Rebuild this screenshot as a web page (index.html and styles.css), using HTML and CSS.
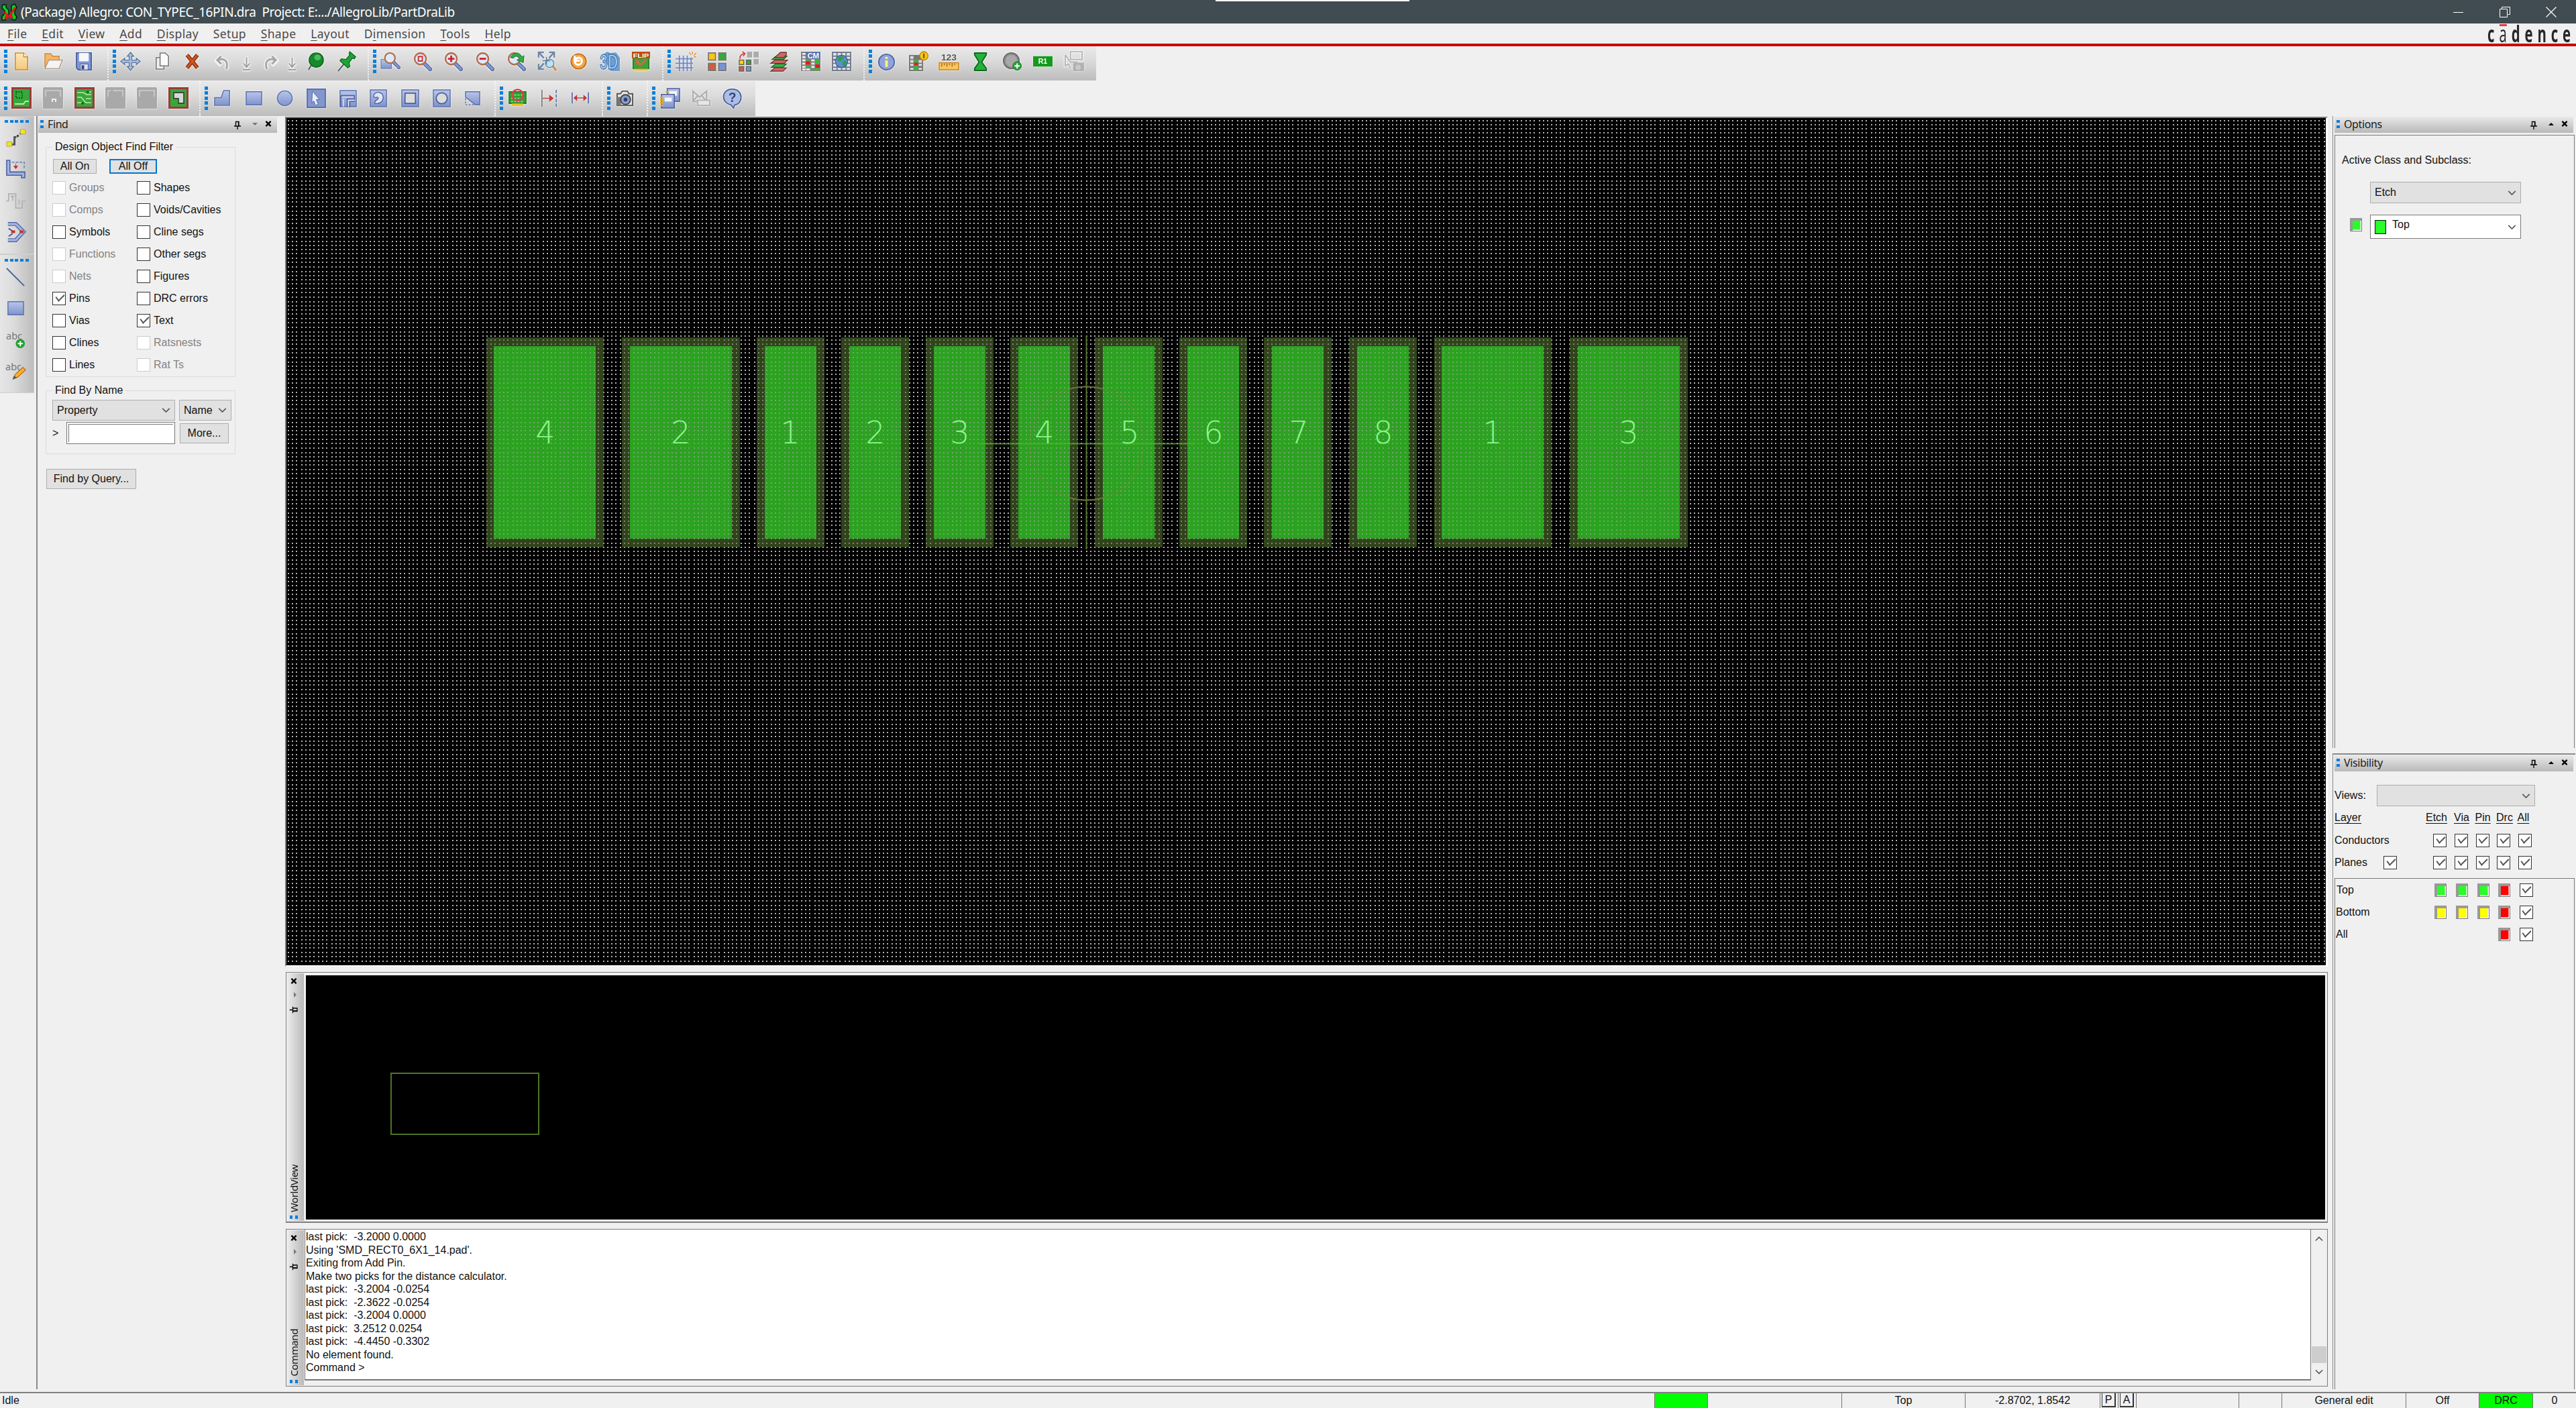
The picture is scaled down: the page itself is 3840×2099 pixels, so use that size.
FILE: index.html
```html
<!DOCTYPE html>
<html lang="en">
<head>
<meta charset="utf-8">
<title>(Package) Allegro: CON_TYPEC_16PIN.dra</title>
<link rel="stylesheet" href="styles.css">
</head>
<body>
<svg class="defs" width="0" height="0">
  <defs>
    <linearGradient id="blue" x1="0" y1="0" x2="0" y2="1"><stop offset="0" stop-color="#b9c6ea"/><stop offset="1" stop-color="#7f93cc"/></linearGradient>
    <linearGradient id="gold" x1="0" y1="0" x2="0" y2="1"><stop offset="0" stop-color="#ffe9b5"/><stop offset="1" stop-color="#f4c77a"/></linearGradient>
    <symbol id="lens" viewBox="0 0 30 30"><path d="M18 18l8 9" stroke="#fff" stroke-width="7" opacity=".6"/><path d="M18 18l9 9" stroke="#50608f" stroke-width="6" stroke-linecap="round"/><path d="M18 18l9 9" stroke="#7f97d6" stroke-width="3.600" stroke-linecap="round"/><circle cx="12" cy="11" r="8.800" fill="#dfe9f8" stroke="#b26f4a" stroke-width="2.600"/></symbol>
    <symbol id="pin" viewBox="0 0 10 13"><path d="M2.500 8V1.500h4.500V8M0 8h10M5 8v5M6.500 2v6" stroke="#000" stroke-width="1.300" fill="none"/></symbol>
    <symbol id="close" viewBox="0 0 10 10"><path d="M1 1l8 8M9 1l-8 8" stroke="#000" stroke-width="2.6"/></symbol>
    <symbol id="chev" viewBox="0 0 14 8"><path d="M1 1l6 6 6-6" stroke="#555" stroke-width="1.8" fill="none"/></symbol>
    <symbol id="down" viewBox="0 0 30 30"><path d="M15 9v14M10 18l5 6 5-6M9 29h12" stroke="#f4f4f4" stroke-width="4" fill="none"/><path d="M15 9v14M10 18l5 6 5-6M9 28h12" stroke="#a0a0a0" stroke-width="2" fill="none"/></symbol>
    <symbol id="graychip" viewBox="0 0 30 32"><rect width="30" height="32" rx="2" fill="#a9a9a9"/><path d="M4 14V5h22v9" fill="none" stroke="#cfcfcf" stroke-width="1.6"/></symbol>
  </defs>
</svg>

<header class="titlebar">
  <svg class="app-icon" viewBox="0 0 24 26"><path d="M2 2h5v4l4 4v6l-5 5v4H1v-5l4-5v-4L1 7z" fill="#0ad01c" stroke="#021" stroke-width="1.5"/><path d="M15 3l5-2 3 5-3 5v5l3 4-2 5-5-1-1-6z" fill="#0ad01c" stroke="#021" stroke-width="1.5"/><path d="M2 13h5l4 5L20 5l2 2-7 10 3 4-3 2-4-3-4 4-3-2 3-5z" fill="#f0141c"/></svg>
  <span class="title-text">(Package) Allegro: CON_TYPEC_16PIN.dra&nbsp; Project: E:.../AllegroLib/PartDraLib</span>
  <i class="top-tab"></i>
  <span class="win-controls">
    <svg width="16" height="16"><path d="M0 8.5h15" stroke="#fff"/></svg>
    <svg width="16" height="16"><path d="M.5 3.5h11v12H.5zM3.5 3.500v-3h12v11h-3" fill="none" stroke="#fff"/></svg>
    <svg width="16" height="16"><path d="M.5.5l15 15M15.500.5l-15 15" stroke="#fff" stroke-width="1.2"/></svg>
  </span>
</header>

<nav class="menubar">
  <span class="menu"><u>F</u>ile</span><span class="menu"><u>E</u>dit</span><span class="menu"><u>V</u>iew</span><span class="menu"><u>A</u>dd</span><span class="menu"><u>D</u>isplay</span><span class="menu">Set<u>u</u>p</span><span class="menu"><u>S</u>hape</span><span class="menu"><u>L</u>ayout</span><span class="menu">D<u>i</u>mension</span><span class="menu"><u>T</u>ools</span><span class="menu"><u>H</u>elp</span>
  <span class="brand">c<i class="bar">a</i>dence</span>
</nav>

<section class="toolrow row-a">
  <div class="group" style="width:162px"><i class="grip"></i>
    <b><svg viewBox="0 0 30 30"><path d="M5 2h13l6 6v20H5z" fill="url(#gold)" stroke="#c98a3c" stroke-width="1.6"/><path d="M18 2v6h6" fill="#fff" stroke="#c98a3c" stroke-width="1.4"/></svg></b>
    <b><svg viewBox="0 0 30 30"><path d="M2 24V3h9l3 4h10v6" fill="#f7b568" stroke="#c98a3c" stroke-width="1.5"/><path d="M2 26L8 13h21l-5 13z" fill="#f6f4f1" stroke="#a99a8c" stroke-width="1.5"/></svg></b>
    <b><svg viewBox="0 0 30 30"><path d="M3 2h23v26H6l-3-3z" fill="#7f96d6" stroke="#4a5f9a" stroke-width="1.8"/><path d="M7 2h15v13H7z" fill="#f5f7fc"/><path d="M9 19h12v9H9z" fill="#dfe4ee" stroke="#4a5f9a"/><path d="M11 21h4v6h-4z" fill="#35467c"/></svg></b>
  </div>
  <div class="group" style="width:388px"><i class="grip"></i>
    <b><svg viewBox="0 0 30 30"><path d="M15 1l5 6h-3v6h7v-3l6 5-6 5v-3h-7v6h3l-5 6-5-6h3v-6H6v3l-6-5 6-5v3h7V7h-3z" fill="#a9c1e0" stroke="#5b7698" stroke-width="1.4"/></svg></b>
    <b><svg viewBox="0 0 30 30"><path d="M6 9h12v18H6z" fill="#eee" stroke="#777" stroke-width="1.6"/><path d="M12 2h8l5 5v15H12z" fill="#fbfbfb" stroke="#777" stroke-width="1.6"/></svg></b>
    <b><svg viewBox="0 0 30 30"><path d="M6 5l16 20M22 5L6 25" stroke="#8a3210" stroke-width="6"/><path d="M6 5l16 20M22 5L6 25" stroke="#d2571f" stroke-width="3"/></svg></b>
    <b style="width:44px"><svg viewBox="0 0 30 30"><path d="M11 7L4 14l7 7M5 14c10-5 18 0 14 13" stroke="#f4f4f4" stroke-width="5" fill="none"/><path d="M11 7L5 13l6 6M6 13c10-4 17 2 13 14" stroke="#a6a6a6" stroke-width="3" fill="none"/></svg></b>
    <b style="width:24px"><svg><use href="#down"/></svg></b>
    <b style="width:44px"><svg viewBox="0 0 30 30"><path d="M19 7l7 7-7 7M25 14c-10-5-18 0-14 13" stroke="#f4f4f4" stroke-width="5" fill="none"/><path d="M19 7l6 6-6 6M24 13c-10-4-17 2-13 14" stroke="#a6a6a6" stroke-width="3" fill="none"/></svg></b>
    <b style="width:24px"><svg><use href="#down"/></svg></b>
    <b><svg viewBox="0 0 30 30"><path d="M10 18L4 28" stroke="#555" stroke-width="2"/><circle cx="16" cy="13" r="11" fill="#168a2c" stroke="#0b5d1c" stroke-width="1.4"/><ellipse cx="18" cy="9" rx="5" ry="4.500" fill="#4dbb5c"/></svg></b>
    <b><svg viewBox="0 0 30 30"><path d="M11 18L1 30" stroke="#555" stroke-width="2"/><path d="M19 0l9 8-2 3-3-1-5 7 1 6-3 2L4 14l2-3 7 1 6-7-1-2z" fill="#21a23a" stroke="#0b6a20" stroke-width="1.4"/></svg></b>
  </div>
  <div class="group" style="width:439px"><i class="grip"></i>
    <b><svg viewBox="0 0 30 30"><path d="M0 12h16v14H0z" fill="url(#blue)" stroke="#5d71ad"/><use href="#lens" x="3" width="27" height="27"/></svg></b>
    <b><svg viewBox="0 0 30 30"><use href="#lens" width="30" height="30"/><path d="M9 7.500h6v7H9z" fill="none" stroke="#d2313a" stroke-width="2"/></svg></b>
    <b><svg viewBox="0 0 30 30"><use href="#lens" width="30" height="30"/><path d="M12 6v10M7 11h10" stroke="#d2212a" stroke-width="3"/></svg></b>
    <b><svg viewBox="0 0 30 30"><use href="#lens" width="30" height="30"/><path d="M7 11h10" stroke="#d2212a" stroke-width="3"/></svg></b>
    <b><svg viewBox="0 0 30 30"><use href="#lens" width="30" height="30"/><path d="M6 9c5-9 14-9 18-1l3-2-1 11-10-4 4-2c-3-5-7-5-9-1z" fill="#35a845" stroke="#14722a"/></svg></b>
    <b><svg viewBox="0 0 30 30"><path d="M2 9V1h8M18 1h8v8M2 19v8h8M3 2l7 8M25 2l-7 8M3 26l7-8" fill="none" stroke="#6d86a6" stroke-width="2.600"/><path d="M22 20l7 9" stroke="#dd8c3c" stroke-width="3.500"/><circle cx="19" cy="18" r="6.500" fill="#bfe1f5" stroke="#5f89b0" stroke-width="1.500"/><path d="M14 8v12M8 14h12" stroke="#567a9c" stroke-width="1.600"/></svg></b>
    <b><svg viewBox="0 0 30 30"><circle cx="15" cy="15" r="11.500" fill="#f6a748" stroke="#c2701d" stroke-width="2"/><path d="M9 15c1 8 12 6 11-1-1-6-8-6-10-1M9 6v8h8" fill="none" stroke="#fff" stroke-width="3"/></svg></b>
    <b><svg viewBox="0 0 30 30"><path d="M5 4l5-4 6 2 8-1 6 8v21H16l-3-4z" fill="#6f9fd0"/><text x="-1" y="27" class="t3d" textLength="28" lengthAdjust="spacingAndGlyphs">3D</text></svg></b>
    <b><svg viewBox="0 0 30 32"><path d="M2 10h26v18H2z" fill="#3fa23a" stroke="#1c7a22" stroke-width="1.6"/><path d="M4 28h22v3H4z" fill="#f0c020"/><path d="M6 14c2 12 14 10 18-2l-4 1c-3 7-8 8-9 1z" fill="#e0604c"/><path d="M0 0h30v11H0z" fill="#b9530f"/><text x="2" y="9.500" class="tflip" textLength="26" lengthAdjust="spacingAndGlyphs">FLIP</text></svg></b>
  </div>
  <div class="group" style="width:300px"><i class="grip"></i>
    <b><svg viewBox="0 0 30 30"><path d="M6 6v24M12 6v24M18 6v24M24 9v21M0 11h27M0 18h27M0 25h27" stroke="#6f86c4" stroke-width="1.900"/><path d="M24 5l-3-4M26 4V0M28 6l4-4M28 8h4" stroke="#dd8a2c" stroke-width="1.500"/></svg></b>
    <b><svg viewBox="0 0 30 30"><g stroke="#777" stroke-width="1.800"><path d="M2 2h11v11H2z" fill="#fcc60d"/><path d="M18 2h11v11H18z" fill="#37a83c"/><path d="M2 18h11v11H2z" fill="#ca6040"/><path d="M18 18h11v11H18z" fill="#7b93d2"/></g></svg></b>
    <b><svg viewBox="0 0 30 30"><path d="M14 0h8v9h-8zM24 0h8v9h-8zM24 11h8v9h-8z" fill="#aaa"/><g stroke="#666" stroke-width="1.600"><path d="M2 13h7v7H2z" fill="#fcd60d"/><path d="M13 13h7v7h-7z" fill="#37a83c"/><path d="M2 23h7v7H2z" fill="#ca6040"/><path d="M13 23h7v7h-7z" fill="#7b93d2"/></g><path d="M3 11c0-6 3-7 7-8M7 0l4 3-3 4" fill="none" stroke="#cf4a4a" stroke-width="2"/></svg></b>
    <b><svg viewBox="0 0 30 30"><g stroke-width="1.400"><path d="M8 25h18l-5 5H2z" fill="#c96a6a" stroke="#7d3030"/><path d="M9 19h17l-5 5H3z" fill="#3fae4e" stroke="#1a6a2a"/><path d="M8 13h20l-5 5H2z" fill="#c96a6a" stroke="#7d3030"/><path d="M10 7h17l-5 5H4z" fill="#3fae4e" stroke="#1a6a2a"/><path d="M17 1h9v4l-4 4H8z" fill="#c96a6a" stroke="#7d3030"/></g></svg></b>
    <b><svg viewBox="0 0 30 30"><path d="M0 0h30v30H0z" fill="#7f7f7f"/><path d="M2 2h5v3H2zM2 7h5v3H2zM2 12h5v3H2zM2 17h5v3H2zM2 22h5v3H2zM2 26h5v3H2zM8 26h6v3H8zM16 12h5v3h-5zM16 22h5v3h-5zM16 17h5v3h-5z" fill="#ececec"/><path d="M8 11h6v3H8zM8 21h6v4H8zM22 11h7v8h-7zM22 25h7v4h-7zM16 26h5v3h-5z" fill="#36b83c"/><path d="M7 15h7v5H7zM22 20h7v5h-7z" fill="#f01414"/><path d="M8 0h22v11H8z" fill="#5c76b0"/><text x="10" y="10" class="tcm" textLength="18" lengthAdjust="spacingAndGlyphs">CM</text></svg></b>
    <b><svg viewBox="0 0 30 30"><path d="M0 0h30v30H0z" fill="#747b8c"/><path d="M2 2h5v4H2zM9 2h5v4H9zM16 2h5v4h-5zM23 2h5v4h-5zM2 8h5v3H2zM2 14h5v3H2zM2 19h5v4H2zM2 25h5v3H2zM9 25h5v3H9zM16 25h5v3h-5zM23 25h5v3h-5zM23 19h5v4h-5zM23 14h5v3h-5zM23 8h5v3h-5z" fill="#dfe4ee"/><circle cx="15" cy="15" r="9.500" fill="#5e8dd0" stroke="#2e4f80"/><path d="M9 10c3-4 9-4 10-1l-4 5-5 1zM16 16l6-3 1 5-5 6z" fill="#2fa045"/></svg></b>
  </div>
  <div class="group last" style="width:345px"><i class="grip"></i>
    <b><svg viewBox="0 0 30 30"><circle cx="15" cy="16" r="12" fill="#8fa4dc" stroke="#5468a6" stroke-width="2"/><path d="M15 8v3.500M15 13.500v10" stroke="#fbf27a" stroke-width="4"/></svg></b>
    <b><svg viewBox="0 0 30 30"><path d="M1 5h22v25H1z" fill="#777"/><path d="M3 7h5v4H3zM3 13h5v4H3zM3 19h5v3H3zM3 25h5v3H3zM16 13h5v4h-5zM16 19h5v3h-5zM16 25h5v3h-5z" fill="#ddd"/><path d="M9 12h6v5H9zM9 22h6v7H9z" fill="#36b83c"/><path d="M9 17h6v4H9z" fill="#e02020"/><circle cx="24" cy="6.500" r="6.500" fill="#f7c613" stroke="#b77c0a" stroke-width="1.300"/><path d="M24 3v7" stroke="#6a4a00" stroke-width="2"/></svg></b>
    <b><svg viewBox="0 0 30 30"><text x="3" y="13.500" class="t123" textLength="24" lengthAdjust="spacingAndGlyphs">123</text><path d="M0 17h30v11H0z" fill="#fbc55e" stroke="#c4862a" stroke-width="1.600"/><path d="M4 18v5M8 18v3M12 18v5M16 18v3M20 18v5M24 18v3" stroke="#9a641a" stroke-width="1.400"/></svg></b>
    <b><svg viewBox="0 0 30 30"><path d="M6 2h18v3l-7 11 7 10v3H6v-3l7-10L6 5z" fill="#25b13b" stroke="#0f6a20" stroke-width="2"/></svg></b>
    <b><svg viewBox="0 0 30 30"><circle cx="14" cy="14" r="12" fill="#8f8f8f" stroke="#6a6a6a" stroke-width="2"/><circle cx="14" cy="14" r="9" fill="#a8a8a8"/><circle cx="23" cy="22" r="6.500" fill="#2aa438" stroke="#157022"/><path d="M23 18v8M19 22h8" stroke="#fff" stroke-width="2"/></svg></b>
    <b><svg viewBox="0 0 30 30"><path d="M0 7h30v16H0z" fill="#159a1c"/><text x="8" y="19" class="tr1" textLength="14" lengthAdjust="spacingAndGlyphs">R1</text></svg></b>
    <b><svg viewBox="0 0 30 30"><path d="M9 0h18v12H9zM1 5v17l5-3 3 7" fill="none" stroke="#f2f2f2" stroke-width="3"/><path d="M9 0h18v12H9zM1 5v17l5-3 3 7M1 5l8 11h10v5" fill="none" stroke="#b1b1b1" stroke-width="1.800"/><path d="M13 17h17v13H13z" fill="#b1b1b1"/><circle cx="21" cy="24" r="4" fill="#c8c8c8"/></svg></b>
  </div>
</section>

<section class="toolrow row-b">
  <div class="group" style="width:299px"><i class="grip"></i>
    <b><svg viewBox="0 0 30 32"><rect x="1.500" y="1.500" width="27" height="29" fill="#35a93a" stroke="#9c3a3a" stroke-width="3"/><path d="M7 7h9v9H7z" fill="none" stroke="#0d5c16" stroke-width="1.800" stroke-dasharray="2 1.500"/><path d="M5 25h13l3-4h5" fill="none" stroke="#bde8a8" stroke-width="1.800"/></svg></b>
    <b><svg viewBox="0 0 30 32"><use href="#graychip" width="30" height="32"/><path d="M14 22v-4h5v4" stroke="#eee" fill="none" stroke-width="2"/></svg></b>
    <b><svg viewBox="0 0 30 32"><rect x="1.500" y="1.500" width="27" height="29" fill="#35a93a" stroke="#9c3a3a" stroke-width="3"/><path d="M4 8h9l5 3h7M4 15h6l7 8h8M4 23h7M20 7h5M17 17h8" fill="none" stroke="#bde8a8" stroke-width="1.600"/><circle cx="20" cy="7" r="1.800" fill="#0d5c16"/><circle cx="12" cy="24" r="1.800" fill="#0d5c16"/></svg></b>
    <b><svg viewBox="0 0 30 32"><use href="#graychip" width="30" height="32"/><path d="M10 4v4h4" fill="none" stroke="#a9a9a9" stroke-width="3"/></svg></b>
    <b><svg viewBox="0 0 30 32"><use href="#graychip" width="30" height="32"/></svg></b>
    <b><svg viewBox="0 0 30 32"><rect x="1.500" y="1.500" width="27" height="29" fill="#35a93a" stroke="#9c3a3a" stroke-width="3"/><path d="M8 8h15v16h-8v-7H8z" fill="#d5d9d5" stroke="#3c4a3c" stroke-width="1.800"/></svg></b>
  </div>
  <div class="group" style="width:440px"><i class="grip"></i>
    <b><svg viewBox="0 0 30 30"><path d="M17 3h9v23H3V14h10z" fill="url(#blue)" stroke="#5d71ad" stroke-width="1.500"/></svg></b>
    <b><svg viewBox="0 0 30 30"><path d="M3 5h24v20H3z" fill="url(#blue)" stroke="#5d71ad" stroke-width="1.500"/></svg></b>
    <b><svg viewBox="0 0 30 30"><circle cx="15" cy="15" r="11.500" fill="url(#blue)" stroke="#5d71ad" stroke-width="1.500"/></svg></b>
    <b><svg viewBox="0 0 30 30"><path d="M1 1h28v28H1z" fill="#8397cd" stroke="#5468a6" stroke-width="1.800"/><path d="M9 4l11 13h-5l3 7-4 2-3-7-3 3z" fill="#e9edf8" stroke="#5468a6"/></svg></b>
    <b><svg viewBox="0 0 30 30"><path d="M3 3h25v25H3z" fill="url(#blue)" stroke="#5d71ad" stroke-width="1.500"/><path d="M4 11h21v5H14v13M4 11v17M18 29V20h8" fill="none" stroke="#4b5e99" stroke-width="1.600"/><path d="M6 13h18M8 28V16M16 28V18h9" stroke="#dfe5f6" stroke-width="1.500" fill="none"/></svg></b>
    <b><svg viewBox="0 0 30 30"><path d="M2 2h25v26H2z" fill="url(#blue)" stroke="#5d71ad" stroke-width="1.500"/><path d="M7 13c0-10 15-9 15 0 0 8-6 11-13 10 0-4 2-5 4-6 3-2 0-5-2-3z" fill="#dfe5f6" stroke="#4b5e99" stroke-width="1.400"/></svg></b>
    <b><svg viewBox="0 0 30 30"><path d="M2 2h26v26H2z" fill="url(#blue)" stroke="#5d71ad" stroke-width="1.500"/><path d="M7 7h16v16H7z" fill="#dcdcdc" stroke="#4b5e99" stroke-width="1.800"/></svg></b>
    <b><svg viewBox="0 0 30 30"><path d="M2 2h26v26H2z" fill="url(#blue)" stroke="#5d71ad" stroke-width="1.500"/><circle cx="15" cy="15" r="8.500" fill="#dcdcdc" stroke="#4b5e99" stroke-width="1.800"/></svg></b>
    <b><svg viewBox="0 0 30 30"><path d="M4 5h22v20H19L4 13z" fill="url(#blue)" stroke="#5d71ad" stroke-width="1.500"/><path d="M4 15v10h13" fill="none" stroke="#5d71ad" stroke-width="1.500" stroke-dasharray="3 2"/></svg></b>
  </div>
  <div class="group" style="width:160px"><i class="grip"></i>
    <b><svg viewBox="0 0 30 30"><path d="M2 5h26v18H2z" fill="#2f9e32" stroke="#167a1c" stroke-width="1.500"/><path d="M6 23h18v4H6z" fill="#f0c020"/><path d="M5 10h20M5 15h20M5 20h20" stroke="#9be08a" stroke-width="1.800" stroke-dasharray="3 2"/><circle cx="15" cy="10" r="8.500" fill="none" stroke="#d8404a" stroke-width="2.600"/></svg></b>
    <b><svg viewBox="0 0 30 30"><path d="M4 2v26" stroke="#777" stroke-width="1.800"/><path d="M26 2v26" stroke="#5d71ad" stroke-width="1.800" stroke-dasharray="5 2"/><path d="M5 15h16M16 11l5 4-5 4z" stroke="#c03c3c" stroke-width="1.600" fill="#c03c3c"/></svg></b>
    <b><svg viewBox="0 0 30 30"><path d="M3 6v17M28 6v17" stroke="#5d71ad" stroke-width="2"/><path d="M6 14.500h19M10 11l-4 3.500 4 3.500zM21 11l4 3.500-4 3.500z" stroke="#c03c3c" stroke-width="1.400" fill="#c03c3c"/></svg></b>
  </div>
  <div class="group" style="width:67px"><i class="grip"></i>
    <b><svg viewBox="0 0 30 30"><path d="M3 8h5l3-4h8l2 4h6v18H3z" fill="#e4e4e4" stroke="#555" stroke-width="2"/><path d="M3 13h6v13H3z" fill="#777"/><circle cx="16" cy="17" r="7.500" fill="#8ea1c8" stroke="#444" stroke-width="2"/><circle cx="16" cy="17" r="3" fill="#2e3f77"/></svg></b>
  </div>
  <div class="group last" style="width:160px"><i class="grip"></i>
    <b><svg viewBox="0 0 30 30"><path d="M11 0h19v20H11z" fill="url(#blue)" stroke="#4b5e99" stroke-width="1.600"/><path d="M14 4h12v7H14z" fill="#f5f7fc"/><path d="M2 9h20v21H2z" fill="url(#blue)" stroke="#4b5e99" stroke-width="1.600"/><path d="M7 14h11v6H7z" fill="#f5f7fc"/><path d="M0 14h5M0 18h5M0 22h5M0 26h5M8 5h5" stroke="#e8b012" stroke-width="2.400"/></svg></b>
    <b><svg viewBox="0 0 30 30"><path d="M2 4l10 9 11-9v16H2zM2 20l8-10M23 20l-8-10" fill="none" stroke="#b1b1b1" stroke-width="2.500"/><path d="M9 18h19v8H9z" fill="#e6e6e6" stroke="#b1b1b1" stroke-width="2"/></svg></b>
    <b><svg viewBox="0 0 30 30"><path d="M15 1c18 0 17 23 4 24l-2 5-4-5C-3 22-2 1 15 1z" fill="#aebde6" stroke="#4b5e99" stroke-width="1.800"/><text x="9" y="21" class="tq">?</text></svg></b>
  </div>
</section>

<main class="workspace">
  <aside class="side-tools">
    <div class="vgroup v1"><i class="hgrip"></i>
      <b><svg viewBox="0 0 30 30"><path d="M8 24h5V13h3" fill="none" stroke="#555" stroke-width="3"/><path d="M17 12l7-6" stroke="#333" stroke-width="3" stroke-dasharray="3 3"/><path d="M1 20h8v7H1zM22 1h8v7h-8z" fill="#f2e228" stroke="#b9a93a"/></svg></b>
      <b><svg viewBox="0 0 30 30"><path d="M1 1h5v18h23v9h-5v-4H1z" fill="#9fb4e4" stroke="#4b5e99" stroke-width="1.600"/><path d="M9 4h19v11" fill="none" stroke="#6f86c4" stroke-width="1.800" stroke-dasharray="4 2"/><path d="M15 6v5M12 10h6l-3 4z" fill="#c82e2e" stroke="#c82e2e"/></svg></b>
      <b><svg viewBox="0 0 30 30"><path d="M0 15h4V4h11v22h10V15h5M7 8h6M10 8v7M20 13v8" fill="none" stroke="#b1b1b1" stroke-width="1.800"/></svg></b>
      <b><svg viewBox="0 0 30 30"><path d="M3 3h12l12 12-12 13H3" fill="none" stroke="#4b5e99" stroke-width="6"/><path d="M3 3h12l12 12-12 13H3" fill="none" stroke="#9fb4e4" stroke-width="3.600"/><path d="M4 10l6 4M4 22l6-4" stroke="#4b5e99" stroke-width="2"/><path d="M8 13h6v4H8zM21 13h6v4h-6z" fill="#c82e2e"/></svg></b>
    </div>
    <div class="vgroup v2"><i class="hgrip"></i>
      <b><svg viewBox="0 0 30 30"><path d="M1 1l27 27" stroke="#4a659a" stroke-width="2"/></svg></b>
      <b><svg viewBox="0 0 30 30"><path d="M3 5h24v20H3z" fill="url(#blue)" stroke="#5d71ad" stroke-width="1.500"/></svg></b>
      <b><svg viewBox="0 0 30 30"><text x="0" y="14" class="tabc">abc</text><circle cx="22" cy="21" r="7" fill="#21a02c"/><path d="M22 17v8M18 21h8" stroke="#fff" stroke-width="2"/></svg></b>
      <b><svg viewBox="0 0 30 30"><text x="-1" y="14" class="tabc">abc</text><path d="M12 27l2-6L26 10l4 4-12 11z" fill="#fbb12b" stroke="#bf6a1c" stroke-width="1.300"/><path d="M10 29l2-6 5 3z" fill="#555"/></svg></b>
    </div>
  </aside>

  <section class="panel find">
    <div class="ptitle"><i class="dots"></i><span>Find</span><svg class="p"><use href="#pin"/></svg><i class="tri dn"></i><svg class="x"><use href="#close"/></svg></div>
    <fieldset class="box filter"><legend>Design Object Find Filter</legend>
      <div class="btns"><button class="btn on">All On</button><button class="btn off">All Off</button></div>
      <div class="checks">
        <label class="dis"><i class="ck"></i>Groups</label><label><i class="ck"></i>Shapes</label>
        <label class="dis"><i class="ck"></i>Comps</label><label><i class="ck"></i>Voids/Cavities</label>
        <label><i class="ck"></i>Symbols</label><label><i class="ck"></i>Cline segs</label>
        <label class="dis"><i class="ck"></i>Functions</label><label><i class="ck"></i>Other segs</label>
        <label class="dis"><i class="ck"></i>Nets</label><label><i class="ck"></i>Figures</label>
        <label><i class="ck set"></i>Pins</label><label><i class="ck"></i>DRC errors</label>
        <label><i class="ck"></i>Vias</label><label><i class="ck set"></i>Text</label>
        <label><i class="ck"></i>Clines</label><label class="dis"><i class="ck"></i>Ratsnests</label>
        <label><i class="ck"></i>Lines</label><label class="dis"><i class="ck"></i>Rat Ts</label>
      </div>
    </fieldset>
    <fieldset class="box byname"><legend>Find By Name</legend>
      <div class="line1"><span class="sel s1">Property<svg><use href="#chev"/></svg></span><span class="sel s2">Name<svg><use href="#chev"/></svg></span></div>
      <div class="line2"><span class="gt">&gt;</span><span class="input"></span><button class="btn more">More...</button></div>
    </fieldset>
    <button class="btn query">Find by Query...</button>
  </section>

  <section class="center">
    <div class="canvas">
      <svg width="3040" height="1263" viewBox="427 176 3040 1263">
        <defs>
          <pattern id="grid" x="429" y="179" width="45" height="45" patternUnits="userSpaceOnUse"><path class="gdots" d=""/></pattern>
          <path id="masks" d="M725 503h175v313H725zM927 503h176v313H927zM1128 503h101v313h-101zM1254 503h101v313h-101zM1380 503h101v313h-101zM1506 503h101v313h-101zM1632 503h101v313h-101zM1758 503h101v313h-101zM1884 503h101v313h-101zM2011 503h101v313h-101zM2138 503h175v313h-175zM2340 503h176v313h-176z"/>
          <path id="pads" d="M736 516h152v287H736zM939 516h152v287H939zM1140 516h77v287h-77zM1266 516h77v287h-77zM1392 516h77v287h-77zM1518 516h77v287h-77zM1644 516h77v287h-77zM1770 516h77v287h-77zM1896 516h77v287h-77zM2023 516h77v287h-77zM2149 516h152v287h-152zM2352 516h152v287h-152z"/>
        </defs>
        <rect x="427" y="176" width="3040" height="1263" fill="#000"/>
        <rect x="427" y="176" width="3040" height="1263" fill="url(#grid)"/>
        <g class="origin"><path d="M1619.500 500v319"/></g>
        <use href="#masks" fill="#30431b"/><use href="#masks" fill="url(#grid)" opacity=".6"/>
        <g class="origin"><path d="M1594 580q25-7 51 0M1594 742q25 7 51 0"/></g>
        <use href="#pads" fill="#2ca221"/><use href="#pads" fill="url(#grid)" opacity=".5"/>
        <circle class="ring" cx="1620" cy="661" r="85"/>
        <path class="hline" d="M1460 661.500h319"/>
        <g class="pinno"><text x="813" y="661">4</text><text x="1015" y="661">2</text><text x="1178" y="661">1</text><text x="1305" y="661">2</text><text x="1431" y="661">3</text><text x="1557" y="661">4</text><text x="1684" y="661">5</text><text x="1809" y="661">6</text><text x="1936" y="661">7</text><text x="2062" y="661">8</text><text x="2225" y="661">1</text><text x="2428" y="661">3</text></g>
      </svg>
    </div>
    <div class="dock world">
      <div class="vtitle"><svg class="x"><use href="#close"/></svg><i class="tri rt"></i><svg class="p"><use href="#pin"/></svg><span>WorldView</span><i class="dots h"></i></div>
      <div class="worldmap"><div class="extent"></div></div>
    </div>
    <div class="dock command">
      <div class="vtitle"><svg class="x"><use href="#close"/></svg><i class="tri rt"></i><svg class="p"><use href="#pin"/></svg><span>Command</span><i class="dots h"></i></div>
      <div class="console"><pre>last pick:  -3.2000 0.0000
Using 'SMD_RECT0_6X1_14.pad'.
Exiting from Add Pin.
Make two picks for the distance calculator.
last pick:  -3.2004 -0.0254
last pick:  -2.3622 -0.0254
last pick:  -3.2004 0.0000
last pick:  3.2512 0.0254
last pick:  -4.4450 -0.3302
No element found.
Command &gt;</pre></div>
      <div class="scroll"><svg class="up"><use href="#chev"/></svg><i class="thumb"></i><svg><use href="#chev"/></svg></div>
    </div>
  </section>

  <aside class="right">
    <section class="panel options">
      <div class="ptitle"><i class="dots"></i><span>Options</span><svg class="p"><use href="#pin"/></svg><i class="tri up"></i><svg class="x"><use href="#close"/></svg></div>
      <div class="obody">
        <div class="olabel">Active Class and Subclass:</div>
        <span class="sel cls">Etch<svg><use href="#chev"/></svg></span>
        <div class="sub"><i class="sw g"></i><span class="sel white"><i class="chip"></i><span>Top</span><svg><use href="#chev"/></svg></span></div>
      </div>
    </section>
    <section class="panel vis">
      <div class="ptitle"><i class="dots"></i><span>Visibility</span><svg class="p"><use href="#pin"/></svg><i class="tri up"></i><svg class="x"><use href="#close"/></svg></div>
      <div class="views"><span>Views:</span><span class="sel vsel"><svg><use href="#chev"/></svg></span></div>
      <div class="vrow head"><span>Layer</span><span></span><u>Etch</u><u>Via</u><u>Pin</u><u>Drc</u><u>All</u></div>
      <div class="vrow"><span>Conductors</span><span></span><i class="ck set"></i><i class="ck set"></i><i class="ck set"></i><i class="ck set"></i><i class="ck set"></i></div>
      <div class="vrow"><span>Planes</span><i class="ck set"></i><i class="ck set"></i><i class="ck set"></i><i class="ck set"></i><i class="ck set"></i><i class="ck set"></i></div>
      <div class="layers">
        <div class="vrow"><span class="ind">Top</span><span></span><i class="sw g"></i><i class="sw g"></i><i class="sw g"></i><i class="sw r"></i><i class="ck set"></i></div>
        <div class="vrow"><span>Bottom</span><span></span><i class="sw y"></i><i class="sw y"></i><i class="sw y"></i><i class="sw r"></i><i class="ck set"></i></div>
        <div class="vrow"><span>All</span><span></span><span></span><span></span><span></span><i class="sw r"></i><i class="ck set"></i></div>
      </div>
    </section>
  </aside>
</main>

<footer class="status">
  <span class="cell idle">Idle</span>
  <span class="cell lime" style="width:79px"></span>
  <span class="cell" style="width:200px"></span>
  <span class="cell" style="width:184px">Top</span>
  <span class="cell" style="width:201px">-2.8702, 1.8542</span>
  <span class="cell key" style="width:27px"><b>P</b></span>
  <span class="cell key" style="width:27px"><b>A</b></span>
  <span class="cell" style="width:153px"></span>
  <span class="cell" style="width:64px"></span>
  <span class="cell" style="width:185px">General edit</span>
  <span class="cell" style="width:109px">Off</span>
  <span class="cell lime" style="width:80px">DRC</span>
  <span class="cell" style="width:65px">0</span>
</footer>
<script src="grid.js"></script>
</body>
</html>
```
FILE: grid.js
```js
// Fill the 45px grid tile with 7 x 7 two-pixel dots.
const xs = [0, 6, 12, 20, 26, 32, 38];
const ys = [0, 6, 12, 18, 25, 31, 38];
document.querySelector('.gdots').setAttribute(
  'd',
  ys.map(y => xs.map(x => `M${x} ${y}h2v2h-2z`).join('')).join('')
);
```
FILE: styles.css
```css
* { box-sizing: border-box; }
html { height: 2099px; overflow: hidden; }
body {
  margin: 0; width: 3840px; height: 2099px; overflow: hidden;
  display: flex; flex-direction: column;
  background: #f0f0f0; color: #111;
  font: 16px/20px "Liberation Sans", Arial, sans-serif;
}
i, b { font-style: normal; font-weight: normal; }
.defs { position: absolute; }
svg { display: block; overflow: visible; flex: none; }

/* title and menu */
.titlebar { height: 35px; flex: none; background: #404c51; color: #fff; display: flex; align-items: center; position: relative; }
.app-icon { width: 24px; height: 26px; margin: 0 5px 0 2px; }
.title-text { font: 19px/34px "Noto Sans", sans-serif; letter-spacing: -.42px; white-space: nowrap; flex: 1; }
.top-tab { position: absolute; left: 1812px; top: 0; width: 289px; height: 2px; background: #fff; }
.win-controls { display: flex; gap: 53px; margin-right: 29px; }
.menubar { height: 30px; flex: none; display: flex; align-items: center; padding-left: 11px; gap: 21.800px; font: 17.5px/30px "Noto Sans", sans-serif; letter-spacing: .35px; color: #4a4a4a; }
.menu { height: 31px; }
.menu u { text-underline-offset: 3px; }
.brand { margin-left: auto; width: 132px; font: 700 34px/28px "Open Sans", sans-serif; letter-spacing: 11.500px; color: #2a2627; transform: scaleX(.6); transform-origin: 0 50%; white-space: nowrap; }
.bar { position: relative; }
.bar::before { content: ""; position: absolute; left: 1px; top: 9px; width: 18px; height: 3px; background: #e5383b; }

/* toolbars */
.toolrow { display: flex; flex: none; }
.row-a { height: 56px; border-top: 4px solid #c00; padding-bottom: 1px; }
.row-b { height: 52px; }
.group { flex: none; display: flex; align-items: center; padding-left: 6px; background: linear-gradient(#e9e9e9, #dcdcdc 40%, #bcbcbc); border-right: 2px dotted #f5f5f5; overflow: hidden; }
.group.last { border-right: 0; }
.row-a .group { padding-bottom: 6px; }
.row-b .group { padding-bottom: 2px; }
.group b { width: 46.7px; flex: none; display: flex; justify-content: center; }
.group > b > svg { width: 29px; height: 29px; filter: drop-shadow(0 0 1px #fff); }
.row-b .group:first-child > b > svg { width: 32px; height: 32px; }
.grip { width: 5px; margin-right: -2px; flex: none; height: 35px; background: repeating-linear-gradient(#0a7fdc 0 5px, transparent 5px 7.500px); }
.t3d { font: 900 32px "Lato", sans-serif; fill: #a9cdf0; stroke: #3f74b0; stroke-width: 1.500px; }
.tflip, .tcm, .tr1 { font: 700 10.500px "Liberation Sans", sans-serif; fill: #fff; }
.t123 { font: 700 14px "Liberation Sans", sans-serif; fill: #555; }
.tq { font: 700 20px "Liberation Sans", sans-serif; fill: #35467c; }
.tabc { font: 15px "Noto Sans", sans-serif; fill: #777; }

/* workspace */
.workspace { flex: 1; display: flex; min-height: 0; }
.side-tools { width: 54px; flex: none; }
.vgroup { width: 51px; padding-left: 0; background: linear-gradient(90deg, #e6e6e6, #dcdcdc 40%, #bcbcbc); border: 1px solid #cfcfcf; border-left: 0; }
.v1 { height: 206px; padding-top: 5px; }
.v2 { height: 207px; padding-top: 6px; }
.hgrip { display: block; width: 36px; height: 4px; margin-left: 7px; background: repeating-linear-gradient(90deg, #0a7fdc 0 5px, transparent 5px 7.700px); }
.vgroup b { display: flex; height: 46.500px; align-items: center; padding-left: 9px; }
.vgroup svg { width: 29px; height: 29px; }

.ptitle { height: 24px; display: flex; align-items: center; background: linear-gradient(#e8e8e8, #b9b9b9); margin: 1px 2px 0 2px; padding: 0 0 3px 3px; font: 16px/20px "Noto Sans", sans-serif; color: #222; letter-spacing: -.4px; }
.ptitle span { flex: 1; padding-left: 6px; }
.dots { width: 5px; height: 12px; background: linear-gradient(#0a7fdc 0 4px, transparent 4px 8px, #0a7fdc 8px); flex: none; }
.dots.h { width: 12px; height: 5px; background: linear-gradient(90deg, #0a7fdc 0 4px, transparent 4px 8px, #0a7fdc 8px); }
svg.p { width: 10px; height: 13px; margin-top: 4px; }
svg.x { width: 10px; height: 9px; margin-right: 8px; }
.tri { width: 0; height: 0; border: 4px solid transparent; margin: 0 11px 0 17px; }
.tri.dn { border-top-color: #777; border-bottom: 0; }
.tri.up { border-bottom-color: #000; border-top: 0; }
.tri.rt { border-left-color: #777; border-right: 0; margin: 12px 0 12px 4px; }

/* find */
.find { width: 360px; flex: none; border-left: 2px solid #8a8a8a; margin-bottom: 4px; }
.find .ptitle { margin: 1px 1px 0 1px; border-right: 0; }
.box { border: 1px solid #dcdcdc; margin: 0 0 0 12px; padding: 0; width: 283px; min-width: 0; position: relative; }
.box legend { margin-left: 9px; padding: 0 4px; line-height: 20px; }
.filter { margin-top: 11px; height: 353px; }
.btns { display: flex; gap: 19px; margin: 8px 0 0 10px; }
.btn { font: 16px/18px "Liberation Sans", Arial, sans-serif; color: #111; background: #e1e1e1; border: 1px solid #adadad; padding: 0; height: 22px; white-space: nowrap; }
.btn.on { width: 65px; } .btn.off { width: 71px; border: 2px solid #0078d7; line-height: 16px; }
.checks { display: grid; grid-template-columns: 126px auto; grid-auto-rows: 33px; margin: 4.500px 0 0 9px; align-items: center; }
.checks label { display: flex; align-items: center; gap: 5px; white-space: nowrap; }
.ck { width: 20px; height: 20px; border: 1.500px solid #333; background: #fff; position: relative; flex: none; display: block; }
.ck.set::after { content: ""; position: absolute; left: 3.500px; top: 2px; width: 11px; height: 6px; border-left: 2px solid #555; border-bottom: 2px solid #555; transform: rotate(-45deg) skewX(-8deg); }
.dis { color: #838383; } .dis .ck { border-color: #ccc; }
.byname { margin-top: 10px; height: 105px; }
.line1 { display: flex; gap: 6px; margin: 4px 0 0 9px; }
.sel { height: 31px; border: 1px solid #adadad; background: #e1e1e1; display: flex; align-items: center; justify-content: space-between; padding: 0 6px; }
.sel svg { width: 13px; height: 7px; }
.s1 { width: 183px; } .s2 { width: 78px; }
.line2 { display: flex; align-items: center; margin: 2px 0 0 9px; }
.gt { width: 21px; }
.input { width: 162px; height: 33px; background: #fff; border: 1px solid #777; box-shadow: inset 0 0 0 2px #fff, inset 3px 3px 0 #777; }
.more { width: 73px; height: 30px; margin-left: 7px; }
.query { width: 134px; height: 30px; margin: 22px 0 0 13px; }

/* centre column */
.center { width: 3045px; margin-left: 11px; flex: none; display: flex; flex-direction: column; }
.canvas { height: 1267px; margin-top: 1px; border: 2px solid #7a7a7a; border-right-color: #fff; border-bottom-color: #fff; }
.gdots { fill: #b2b2b2; }
.origin { fill: none; stroke: #567030; stroke-width: 2; }
.ring { fill: none; stroke: #8a7a40; stroke-width: 1.500; opacity: .45; }
.hline { stroke: #4cb62c; stroke-width: 2; opacity: .75; }
.pinno text { font: 200 46px "DejaVu Sans", sans-serif; fill: #8cf58a; text-anchor: middle; }
.dock { display: flex; border: 1px solid #7d7d7d; margin-left: 1px; }
.world { margin-top: 8px; height: 374px; border-bottom-width: 2px; }
.command { margin-top: 9px; height: 235px; }
.vtitle { width: 25px; flex: none; margin: 1px; display: flex; flex-direction: column; align-items: center; background: linear-gradient(90deg, #ececec, #b9b9b9); padding: 7px 5px 3px 0; }
.vtitle svg.x { margin: 0; }
.vtitle svg.p { transform: rotate(90deg); margin: 0; }
.vtitle span { margin-top: auto; writing-mode: vertical-rl; transform: rotate(180deg); font: 15px/20px "Noto Sans", sans-serif; letter-spacing: -.4px; margin-bottom: 5px; }
.worldmap { flex: 1; background: #000; margin: 4px 3px 3px 2px; position: relative; }
.extent { position: absolute; left: 126px; top: 145px; width: 222px; height: 93px; border: 2px solid #4e7324; }
.console { flex: 1; background: #fff; border: 1px solid #777; border-width: 0 1px 2px 1px; margin-bottom: 8px; }
.console pre { margin: 1px 0 0 1px; font: 16px/19.550px "Liberation Sans", Arial, sans-serif; }
.scroll { width: 24px; display: flex; flex-direction: column; align-items: center; padding: 10px 0 17px; }
.scroll svg { width: 12px; height: 8px; } .scroll .up { transform: rotate(180deg); }
.thumb { width: 22px; height: 25px; background: #cdcdcd; margin: auto 0 9px; }

/* right column */
.right { width: 362px; margin-left: 7px; flex: none; }
.panel.options { height: 942px; display: flex; flex-direction: column; border-left: 1px solid #8a8a8a; }
.right .ptitle { margin-right: 3px; }
.obody { flex: 1; margin: 3px 0 0 2px; border: 1.500px solid #7a7a7a; border-bottom: 0; padding: 27px 0 0 10px; width: 358px; }
.cls { width: 225px; height: 32px; margin: 22px 0 0 42px; }
.sub { display: flex; margin: 17px 0 0 12px; gap: 12px; align-items: flex-start; }
.sub .sw { margin-top: 5px; }
.white { width: 225px; height: 36px; background: #fff; border-color: #7a7a7a; }
.white span { flex: 1; padding: 0 0 6px 9px; }
.chip { width: 17px; height: 21px; background: #27ff27; border: 1.500px solid #111; }
.sw { display: block; width: 18px; height: 20px; border: 1.500px solid #777; border-left: 4px solid #999; border-top: 4px solid #999; outline: 0; box-shadow: inset -1.500px -1.500px 0 #fff; }
.g { background: #27ff27; } .y { background: #ff0; } .r { background: #f00; }
.vis { margin-top: 8px; height: 948px; border-left: 1px solid #8a8a8a; border-top: 2px solid #8a8a8a; overflow: hidden; }
.views { display: flex; align-items: center; height: 32px; margin: 20px 0 0 2px; }
.views span:first-child { width: 63px; }
.vsel { width: 236px; height: 32px; justify-content: flex-end; }
.vrow { display: grid; grid-template-columns: 74px 73px 32px 31.500px 31.500px 31.500px 30px; height: 33px; align-items: center; margin-left: 2px; white-space: nowrap; }
.vrow > :nth-child(2) { margin-left: -1px; }
.head > :nth-child(n+3) { margin-left: -1px; }
.head > :nth-child(3) { margin-left: -11px; }
.head { height: 34px; } .head span:first-child { text-decoration: underline; } .head u, .head span { text-underline-offset: 3px; }
.layers { margin: 7px 0 0 2px; width: 358px; height: 765px; border: 1.500px solid #7a7a7a; border-bottom: 0; }
.layers .vrow { margin-left: 1px; }
.layers .ind { padding-left: 1px; }

/* status */
.status { height: 24px; flex: none; border-top: 2px solid #808080; display: flex; font-size: 16px; line-height: 21px; overflow: hidden; }
.cell { border-left: 1.500px solid #777; text-align: center; flex: none; margin-right: 0; }
.idle { width: 2466px; border: 0; text-align: left; padding-left: 3px; }
.lime { background: #0f0; }
.key b { display: block; width: 21px; margin-left: 2px; height: 21px; border: solid #333; border-width: 0 2px 2px 1px; line-height: 20px; }
```
